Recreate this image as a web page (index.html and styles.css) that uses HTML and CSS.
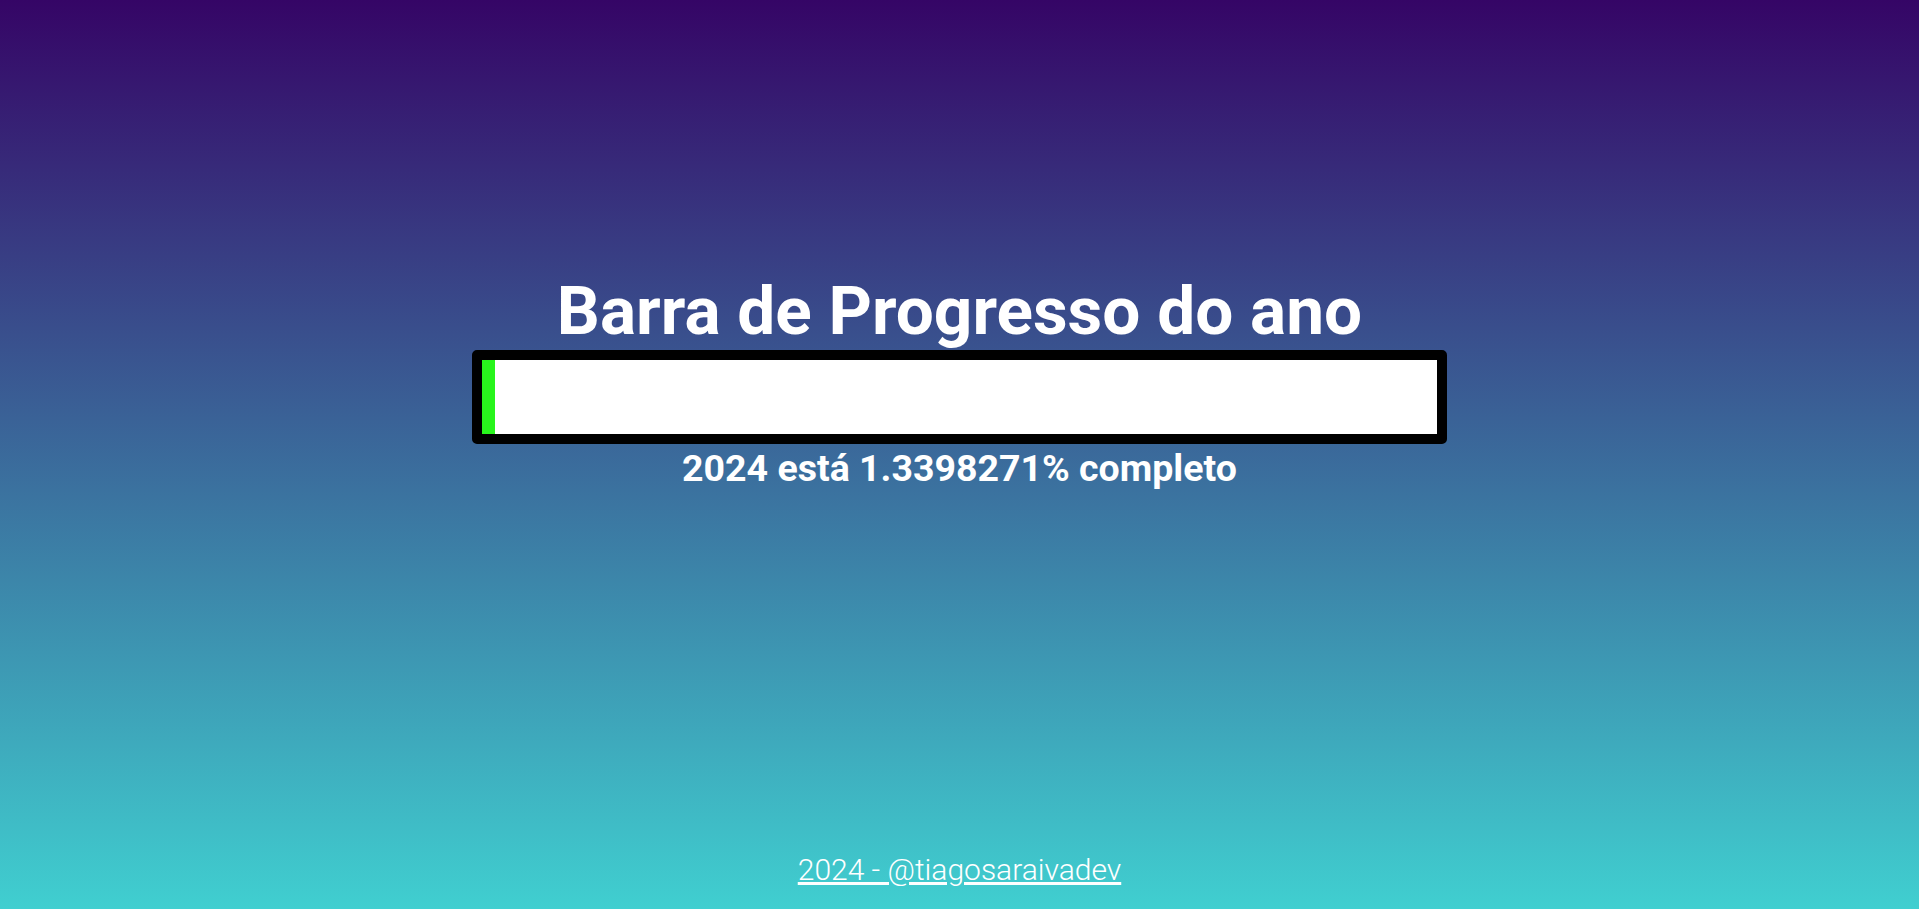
FILE: index.html
```html
<!DOCTYPE html>
<html lang="pt-BR">
<head>
<meta charset="utf-8">
<title>Barra de Progresso do ano</title>
<link rel="stylesheet" href="styles.css">
</head>
<body>
<main class="main">
  <h1 class="title">Barra de Progresso do ano</h1>
  <div class="bar">
    <div class="bar-fill" style="width: 1.3398271%"></div>
  </div>
  <p class="subtitle">2024 está 1.3398271% completo</p>
</main>
<footer class="footer">
  <a class="footer-link" href="#">2024 - @tiagosaraivadev</a>
</footer>
</body>
</html>
```
FILE: styles.css
```css
html, body {
  margin: 0;
  padding: 0;
  height: 100%;
}
body {
  font-family: Roboto, "Liberation Sans", sans-serif;
  color: #fff;
  background: linear-gradient(to bottom, #350566 0%, #40cfd0 100%);
  display: flex;
  flex-direction: column;
  align-items: center;
}
.main {
  flex: 1;
  display: flex;
  flex-direction: column;
  align-items: center;
  justify-content: center;
  width: 100%;
  padding-bottom: 88px;
}
.title {
  margin: 0;
  font-size: 67.5px;
  font-weight: 700;
  line-height: 1.1;
}
.bar {
  box-sizing: border-box;
  width: 975px;
  height: 94px;
  border: 10px solid #000;
  border-radius: 5px;
  background: #fff;
  margin-top: 2px;
}
.bar-fill {
  height: 100%;
  background: #28f51c;
}
.subtitle {
  margin: 2px 0 0;
  font-size: 37.5px;
  font-weight: 700;
}
.footer {
  padding-bottom: 22px;
}
.footer-link {
  color: #fff;
  font-size: 30px;
  font-weight: 300;
}
```
